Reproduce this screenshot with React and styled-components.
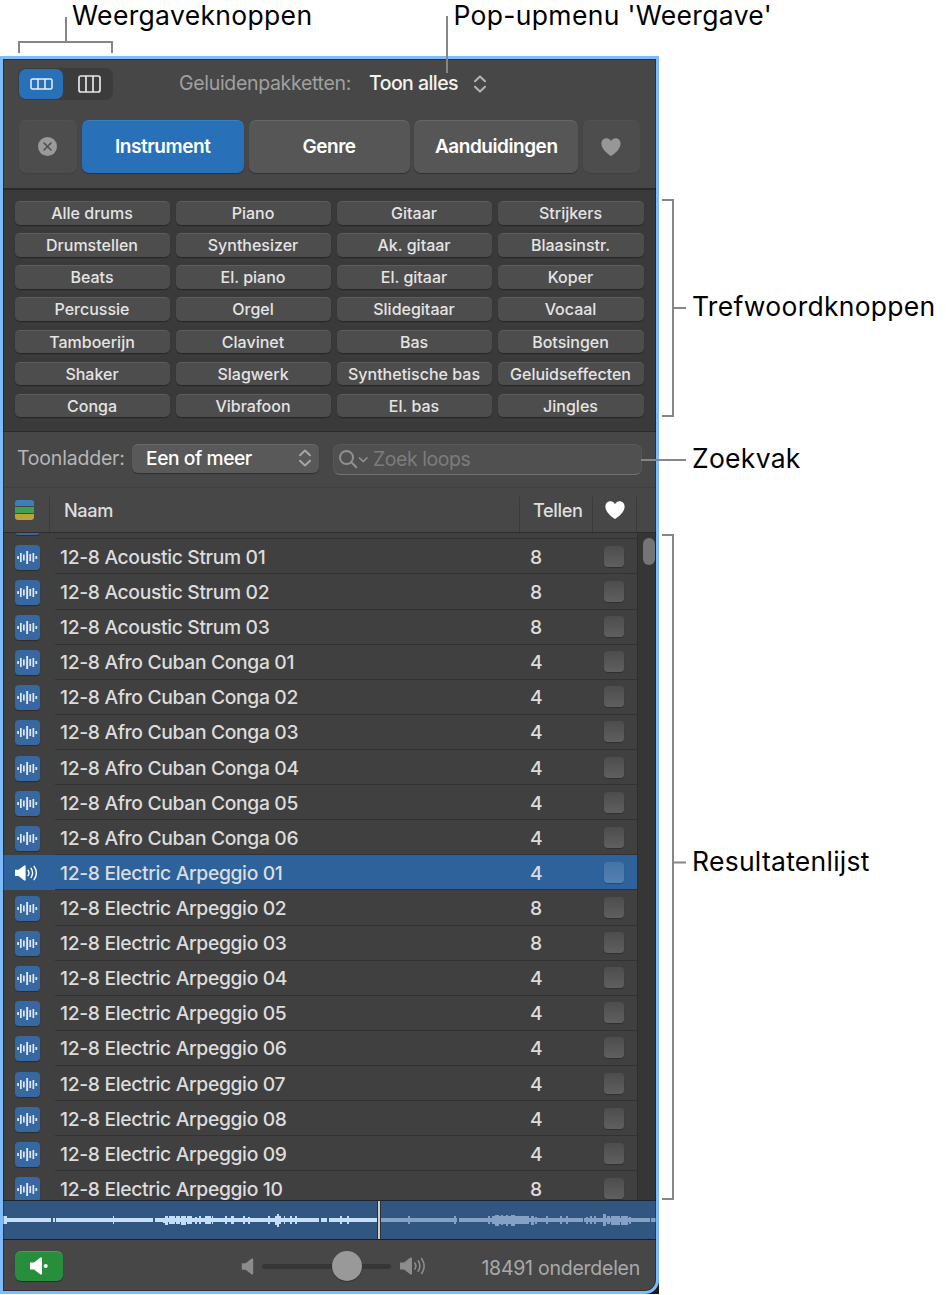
import React from 'react';
import styled, {createGlobalStyle, css} from "styled-components";

const keywords = [
    'Alle drums', 'Piano', 'Gitaar', 'Strijkers',
    'Drumstellen', 'Synthesizer', 'Ak. gitaar', 'Blaasinstr.',
    'Beats', 'El. piano', 'El. gitaar', 'Koper',
    'Percussie', 'Orgel', 'Slidegitaar', 'Vocaal',
    'Tamboerijn', 'Clavinet', 'Bas', 'Botsingen',
    'Shaker', 'Slagwerk', 'Synthetische bas', 'Geluidseffecten',
    'Conga', 'Vibrafoon', 'El. bas', 'Jingles',
]

const loops = [
    {name: '12-8 Acoustic Strum 01', beats: 8},
    {name: '12-8 Acoustic Strum 02', beats: 8},
    {name: '12-8 Acoustic Strum 03', beats: 8},
    {name: '12-8 Afro Cuban Conga 01', beats: 4},
    {name: '12-8 Afro Cuban Conga 02', beats: 4},
    {name: '12-8 Afro Cuban Conga 03', beats: 4},
    {name: '12-8 Afro Cuban Conga 04', beats: 4},
    {name: '12-8 Afro Cuban Conga 05', beats: 4},
    {name: '12-8 Afro Cuban Conga 06', beats: 4},
    {name: '12-8 Electric Arpeggio 01', beats: 4, playing: true},
    {name: '12-8 Electric Arpeggio 02', beats: 8},
    {name: '12-8 Electric Arpeggio 03', beats: 8},
    {name: '12-8 Electric Arpeggio 04', beats: 4},
    {name: '12-8 Electric Arpeggio 05', beats: 4},
    {name: '12-8 Electric Arpeggio 06', beats: 4},
    {name: '12-8 Electric Arpeggio 07', beats: 4},
    {name: '12-8 Electric Arpeggio 08', beats: 4},
    {name: '12-8 Electric Arpeggio 09', beats: 4},
    {name: '12-8 Electric Arpeggio 10', beats: 8},
]

// waveform peaks: [x, width, height]
const playedPeaks = [
    [0, 4, 8], [110, 1, 8], [160, 2, 5], [162, 3, 9], [166, 6, 8], [173, 4, 8], [178, 5, 9], [184, 5, 8], [192, 2, 7],
    [196, 2, 8], [202, 6, 8], [209, 1, 8], [222, 2, 8], [228, 3, 8], [240, 2, 8], [245, 2, 7], [265, 2, 8],
    [272, 2, 9], [274, 2, 13], [276, 2, 8], [281, 1, 8], [287, 2, 8], [292, 2, 8], [337, 2, 8], [344, 2, 8],
]
const comingPeaks = [
    [405, 2, 8], [451, 2, 8], [485, 2, 8], [489, 37, 8], [492, 4, 11], [498, 2, 10], [503, 2, 11], [508, 4, 11],
    [528, 3, 9], [532, 2, 7], [543, 2, 8], [557, 2, 8], [563, 2, 8], [583, 2, 7], [587, 2, 8], [591, 2, 8],
    [600, 3, 12], [604, 3, 8], [608, 9, 9], [618, 7, 9], [626, 2, 7],
]

const Heart = ({size, color}) => (
    <svg width={size} height={size * 0.9} viewBox="0 0 20 18" fill={color}>
        <path d="M10 18C9.6 18 .4 12 .4 5.7.4 2.500 2.600.3 5.400.3 7.400.3 9.100 1.400 10 3.200 10.900 1.400 12.600.3 14.600.3c2.800 0 5 2.200 5 5.400C19.600 12 10.400 18 10 18z"/>
    </svg>
)

const UpDown = ({color}) => (
    <svg width="14" height="18" viewBox="0 0 14 18" fill="none" stroke={color} strokeWidth="2" strokeLinecap="round"
         strokeLinejoin="round">
        <path d="M2 6.200 7 1.500l5 4.700M2 11.800l5 4.700 5-4.700"/>
    </svg>
)

const SpeakerBody = () => <path d="M0 5.500h4L10.500.6Q12 0 12 1.400v15.200Q12 18 10.500 17.400L4 12.500H0z"/>

const SpeakerWaves = ({color, width = 23}) => (
    <svg width={width} height={width * 18 / 26} viewBox="0 0 26 18" fill={color}>
        <SpeakerBody/>
        <path d="M14.800 6Q16.800 9 14.800 12M18.200 3.800Q21.600 9 18.200 14.200M21.600 1.500Q26.700 9 21.600 16.500" fill="none"
              stroke={color} strokeWidth="1.600" strokeLinecap="round"/>
    </svg>
)

const LoopIcon = () => (
    <svg width="21" height="15" viewBox="0 0 21 15" fill="#dfe9f5">
        <rect x="0.200" y="6" width="1.800" height="3" rx="0.500"/>
        <rect x="3" y="3" width="1.700" height="9"/>
        <rect x="6" y="4.500" width="1.700" height="6"/>
        <rect x="9.200" y="1" width="1.900" height="13"/>
        <rect x="12.400" y="4" width="1.700" height="7"/>
        <rect x="15.500" y="3" width="1.700" height="9"/>
        <rect x="18.400" y="6" width="1.800" height="3" rx="0.500"/>
    </svg>
)

export default function App() {
    return (
        <Page>
            <GlobalStyle/>
            <TopCallouts>
                <ViewBracket/>
                <TopLabel $left={72}>Weergaveknoppen</TopLabel>
                <TopLabel $left={141}>Pop-upmenu 'Weergave'</TopLabel>
                <PopupLine/>
            </TopCallouts>
            <Body>
                <WindowBack>
                    <Window>
                        <Toolbar>
                            <ViewRow>
                                <Segmented>
                                    <Segment $active>
                                        <svg width="23" height="12" viewBox="0 0 23 12" fill="none" stroke="#e8f1fb"
                                             strokeWidth="1.500">
                                            <rect x="1" y="1" width="21" height="10" rx="1.500"/>
                                            <path d="M8 1v10M15 1v10"/>
                                        </svg>
                                    </Segment>
                                    <Segment>
                                        <svg width="23" height="18" viewBox="0 0 23 18" fill="none" stroke="#e6e6e6"
                                             strokeWidth="1.700">
                                            <rect x="1" y="1" width="21" height="16" rx="2"/>
                                            <path d="M8 1v16M15 1v16"/>
                                        </svg>
                                    </Segment>
                                </Segmented>
                                <PackLabel>Geluidenpakketten:</PackLabel>
                                <PackValue>Toon alles</PackValue>
                                <UpDown color="#b5b5b5"/>
                            </ViewRow>
                            <Tabs>
                                <Tab $dim>
                                    <svg width="19" height="19" viewBox="0 0 19 19">
                                        <circle cx="9.500" cy="9.500" r="9.500" fill="#9a9a9a"/>
                                        <path d="M6 6l7 7M13 6l-7 7" stroke="#4e4e4e" strokeWidth="1.600"
                                              strokeLinecap="round"/>
                                    </svg>
                                </Tab>
                                <Tab $active>Instrument</Tab>
                                <Tab>Genre</Tab>
                                <Tab>Aanduidingen</Tab>
                                <Tab $dim><Heart size={20} color="#979797"/></Tab>
                            </Tabs>
                        </Toolbar>
                        <Keywords>
                            {keywords.map(word => <Keyword key={word}>{word}</Keyword>)}
                        </Keywords>
                        <Filters>
                            <ScaleLabel>Toonladder:</ScaleLabel>
                            <ScaleSelect>Een of meer<UpDown color="#a6a6a6"/></ScaleSelect>
                            <Search>
                                <svg width="29" height="19" viewBox="0 0 29 19" fill="none" stroke="#919191"
                                     strokeWidth="2" strokeLinecap="round" strokeLinejoin="round">
                                    <circle cx="7.500" cy="7.500" r="6.500"/>
                                    <path d="M12.300 12.300l5 5"/>
                                    <path d="M20.500 8l3.700 3.500L27.900 8" strokeWidth="1.700"/>
                                </svg>
                                Zoek loops
                            </Search>
                        </Filters>
                        <Header>
                            <HeadCell>
                                <Stack><i/><i/><i/></Stack>
                            </HeadCell>
                            <HeadCell $pad={14}>Naam</HeadCell>
                            <HeadCell $pad={13}>Tellen</HeadCell>
                            <HeadCell $pad={12}><Heart size={20} color="#ffffff"/></HeadCell>
                            <HeadCell/>
                        </Header>
                        <Results>
                            <List>
                                <Row>
                                    <IconCell><Badge><LoopIcon/></Badge></IconCell>
                                    <NameCell/>
                                </Row>
                                {loops.map(loop => (
                                    <Row key={loop.name} $playing={loop.playing}>
                                        <IconCell>
                                            {loop.playing ? <SpeakerWaves color="#ffffff"/> :
                                                <Badge><LoopIcon/></Badge>}
                                        </IconCell>
                                        <NameCell $playing={loop.playing}>
                                            <Name>{loop.name}</Name>
                                            <Beats>{loop.beats}</Beats>
                                            <Check $playing={loop.playing}/>
                                        </NameCell>
                                    </Row>
                                ))}
                            </List>
                            <Scroll><Thumb/></Scroll>
                        </Results>
                        <Wave>
                            <svg width="653" height="38" viewBox="0 0 653 38" shapeRendering="crispEdges">
                                <g fill="#c5defb">
                                    <path d="M0 17h48v4H0zM50 17h1.500v4H50zM53 17h97v4H53zM152 17h164v4H152zM318 17h6v4h-6zM326 17h48v4h-48z"/>
                                    {playedPeaks.map(([x, w, h]) => <rect key={x} x={x} y={19 - h / 2} width={w}
                                                                          height={h}/>)}
                                </g>
                                <g fill="#87a1c6">
                                    <path d="M378 17h76v4h-76zM456 17h124v4H456zM581 17h66v4h-66zM648 17h5v4h-5z"/>
                                    {comingPeaks.map(([x, w, h]) => <rect key={x} x={x} y={19 - h / 2} width={w}
                                                                          height={h}/>)}
                                </g>
                                <rect x="374" y="0" width="4" height="38" fill="#27303b"/>
                                <rect x="375" y="0" width="2" height="38" fill="#d0cbc6"/>
                            </svg>
                        </Wave>
                        <Footer>
                            <PlayButton>
                                <svg width="18" height="18" viewBox="0 0 18 18" fill="#ffffff">
                                    <SpeakerBody/>
                                    <circle cx="15.700" cy="9" r="2"/>
                                </svg>
                            </PlayButton>
                            <svg width="13" height="17" viewBox="0 0 12 18" fill="#8c8c8c"><SpeakerBody/></svg>
                            <Slider><Knob/></Slider>
                            <SpeakerWaves color="#8c8c8c" width={26}/>
                            <Count>18491 onderdelen</Count>
                        </Footer>
                    </Window>
                </WindowBack>
                <SideCallouts>
                    <Callout $top={143} $height={218}>
                        <Bracket/><Tick/><Label>Trefwoordknoppen</Label>
                    </Callout>
                    <Callout $top={27} $height={32}>
                        <SearchLine/><Label>Zoekvak</Label>
                    </Callout>
                    <Callout $top={58} $height={666} $shift={-9}>
                        <Bracket/><Tick/><Label>Resultatenlijst</Label>
                    </Callout>
                </SideCallouts>
            </Body>
        </Page>
    );
}

const GlobalStyle = createGlobalStyle`
  body {
    margin: 0;
    background: #ffffff;
  }

  * {
    box-sizing: border-box;
  }

  svg {
    display: block;
    flex: none;
  }
`

const Page = styled.div`
  width: 947px;
  height: 1295px;
  font-family: Inter, "Liberation Sans", sans-serif;
  white-space: nowrap;
`

const TopCallouts = styled.div`
  position: relative;
  display: flex;
  height: 56px;
`
const TopLabel = styled.div`
  margin-left: ${props => props.$left}px;
  font-size: 26.5px;
  line-height: 31px;
  letter-spacing: 0.33px;
  color: #000000;
`
const ViewBracket = styled.div`
  position: absolute;
  left: 18px;
  top: 41px;
  width: 95px;
  height: 12px;
  border: 2px solid #868686;
  border-bottom: 0;

  &::before {
    content: "";
    position: absolute;
    left: 45px;
    top: -26px;
    width: 2px;
    height: 25px;
    background: #868686;
  }
`
// runs down over the window edge to the pop-up menu
const PopupLine = styled.div`
  position: absolute;
  z-index: 1;
  left: 446px;
  top: 16px;
  width: 2px;
  height: 57px;
  background: #868686;
`

const Body = styled.div`
  display: flex;
`
const WindowBack = styled.div`
  width: 659px;
  height: 1238px;
  background: linear-gradient(#74b6fb 90%, #1c1a12 90%);
`
const Window = styled.div`
  position: relative;
  width: 659px;
  height: 1238px;
  display: flex;
  flex-direction: column;
  overflow: hidden;
  border: 3px solid #7dbbfc;
  border-bottom-right-radius: 14px;
  background: #474747;

  /* dark hairline just inside the focus ring */
  &::after {
    content: "";
    position: absolute;
    inset: 0;
    border: 1px solid rgba(0, 0, 0, 0.3);
    border-bottom-right-radius: 11px;
    pointer-events: none;
  }
`

const Toolbar = styled.div`
  height: 131px;
  padding: 9px 16px 0 16px;
  border-bottom: 2px solid #2a2a2a;
  background: #474747;
`
const ViewRow = styled.div`
  display: flex;
  align-items: center;
  height: 32px;
  margin-left: -1px;
  font-size: 19.5px;
`
const Segmented = styled.div`
  display: flex;
  width: 95px;
  height: 32px;
  padding: 1px;
  border-radius: 8px;
  background: #3c3c3c;
`
const Segment = styled.div`
  display: flex;
  flex: none;
  align-items: center;
  justify-content: center;
  width: ${props => props.$active ? '44px' : '52px'};
  height: 30px;
  border-radius: 7px;
  background: ${props => props.$active ? '#2870b8' : 'transparent'};
`
const PackLabel = styled.div`
  width: 190px;
  margin-left: 66px;
  padding-bottom: 2px;
  letter-spacing: -0.32px;
  color: #a0a0a0;
`
const PackValue = styled.div`
  width: 104px;
  padding-bottom: 2px;
  font-weight: 500;
  letter-spacing: -0.55px;
  color: #f2f2f2;
`
const Tabs = styled.div`
  display: grid;
  grid-template-columns: 58px 162px 161px 164px 57px;
  justify-content: space-between;
  margin-top: 20px;
`
const Tab = styled.div`
  display: flex;
  align-items: center;
  justify-content: center;
  height: 53px;
  padding-bottom: 1px;
  border-radius: 7px;
  font-size: 19px;
  font-weight: 600;
  letter-spacing: -0.45px;
  color: #ffffff;
  background: #565656;
  box-shadow: inset 0 1px 0 rgba(255, 255, 255, 0.1), 0 1px 1px rgba(0, 0, 0, 0.3);
  ${props => props.$active && css`
    background: #2870b8;
  `}
  ${props => props.$dim && css`
    padding: 0 1px 0 0;
    background: #4d4d4d;
    box-shadow: inset 0 1px 0 rgba(255, 255, 255, 0.03), 0 1px 1px rgba(0, 0, 0, 0.1);
  `}
`

const Keywords = styled.div`
  display: grid;
  grid-template-columns: 155px 155px 155px 146px;
  grid-auto-rows: 23.5px;
  gap: 8.65px 6px;
  height: 242px;
  padding: 11px 0 0 12px;
  border-bottom: 1px solid #2b2b2b;
  background: #3a3a3a;
`
const Keyword = styled.div`
  padding-right: 1px;
  border-radius: 5px;
  background: #4d4d4d;
  box-shadow: inset 0 1px 0 rgba(255, 255, 255, 0.09), 0 1px 1px rgba(0, 0, 0, 0.35);
  font-size: 16px;
  font-weight: 500;
  line-height: 24px;
  text-align: center;
  color: #e4e4e4;
`

const Filters = styled.div`
  display: flex;
  height: 56px;
  padding-top: 12px;
  border-bottom: 1px solid #404040;
  font-size: 19.5px;
`
const ScaleLabel = styled.div`
  width: 115px;
  margin-left: 14px;
  line-height: 29px;
  letter-spacing: -0.2px;
  color: #b6b6b6;
`
const ScaleSelect = styled.div`
  display: flex;
  align-items: center;
  justify-content: space-between;
  width: 187px;
  height: 29px;
  padding: 0 7px 1px 14px;
  border-radius: 6px;
  background: #595959;
  box-shadow: inset 0 1px 0 rgba(255, 255, 255, 0.1), 0 1px 1px rgba(0, 0, 0, 0.35);
  font-size: 19.2px;
  font-weight: 500;
  letter-spacing: -0.42px;
  color: #ffffff;
`
const Search = styled.div`
  display: flex;
  align-items: center;
  gap: 5px;
  width: 309px;
  height: 31px;
  margin-left: 14px;
  padding: 0 0 1px 5px;
  border: 1px solid #585858;
  border-bottom-color: #727272;
  border-radius: 7px;
  background: #505050;
  letter-spacing: -0.45px;
  color: #7c7c7c;
`

const Header = styled.div`
  display: grid;
  grid-template-columns: 46px 470px 73px 44px 20px;
  height: 45px;
  padding-top: 9px;
  border-bottom: 1px solid #2d2d2d;
`
const HeadCell = styled.div`
  display: flex;
  align-items: center;
  padding: 0 0 9px ${props => props.$pad || 0}px;
  border-left: ${props => props.$pad === undefined ? 0 : '1px solid #3b3b3b'};
  font-size: 18.2px;
  font-weight: 500;
  letter-spacing: -0.4px;
  color: #dedede;

  &:last-child {
    border-left: 1px solid #3b3b3b;
  }
`
const Stack = styled.div`
  display: flex;
  flex-direction: column;
  gap: 1px;
  width: 19px;
  height: 20px;
  margin-left: 12px;
  border-radius: 3px;
  overflow: hidden;

  i {
    flex: 1;
    background: #3c80ba;
  }

  i:nth-child(2) {
    background: #3fa24f;
  }

  i:nth-child(3) {
    background: #bba42f;
  }
`

const Results = styled.div`
  display: flex;
  height: 667px;
`
const List = styled.div`
  flex: 1;
  overflow: hidden;
  background: #404040;

  > :first-child {
    margin-top: -28.800px;
  }
`
const Row = styled.div`
  display: flex;
  height: 35.110px;
  background: ${props => props.$playing ? '#2e629b' : 'transparent'};
`
const IconCell = styled.div`
  display: flex;
  align-items: center;
  width: 52px;
  padding: 1px 0 0 12px;
`
const Badge = styled.div`
  display: flex;
  align-items: center;
  justify-content: center;
  width: 25px;
  height: 25px;
  border-radius: 4px;
  background: #3868a1;
  box-shadow: 0 1px 1px rgba(0, 0, 0, 0.3);
`
const NameCell = styled.div`
  display: flex;
  align-items: center;
  flex: 1;
  padding-left: 5px;
  border-bottom: 1px solid ${props => props.$playing ? '#28323e' : '#323232'};
  font-size: 19.3px;
  font-weight: 500;
  color: #dcdcdc;
`
const Name = styled.div`
  width: 470px;
  padding-top: 1px;
  letter-spacing: -0.34px;
`
const Beats = styled.div`
  width: 74px;
  padding-top: 1px;
`
const Check = styled.div`
  width: 20px;
  height: 21px;
  border-radius: 4px;
  background: ${props => props.$playing ? 'linear-gradient(#4473a6, #5581b0)' : 'linear-gradient(#4d4d4d, #5f5f5f)'};
  box-shadow: 0 1px 1px rgba(0, 0, 0, 0.25);
`
const Scroll = styled.div`
  width: 19px;
  padding: 5px 0 0 5px;
  border-left: 1px solid #2f2f2f;
  background: #363636;
`
const Thumb = styled.div`
  width: 12px;
  height: 27px;
  border-radius: 6px;
  background: #757575;
`

const Wave = styled.div`
  height: 40px;
  border-top: 1px solid #1d2430;
  border-bottom: 1px solid #1f1f1f;
  background: #315781;
`
const Footer = styled.div`
  display: flex;
  align-items: center;
  height: 51px;
  padding: 1px 16px 0 12px;
  font-size: 19.5px;
  color: #a9a9a9;
`
const PlayButton = styled.div`
  display: flex;
  align-items: center;
  justify-content: center;
  width: 48px;
  height: 30px;
  margin-right: 178px;
  border-radius: 6px;
  background: #278f3b;
  box-shadow: inset 0 1px 0 rgba(255, 255, 255, 0.15), 0 1px 1px rgba(0, 0, 0, 0.4);
`
const Slider = styled.div`
  display: flex;
  align-items: center;
  width: 129px;
  height: 5px;
  margin: 0 9px 0 8px;
  border-radius: 3px;
  background: #363636;
`
const Knob = styled.div`
  flex: none;
  width: 30px;
  height: 30px;
  margin-left: 70px;
  border-radius: 50%;
  background: #999999;
  box-shadow: 0 1px 1px rgba(0, 0, 0, 0.3);
`
const Count = styled.div`
  margin: 3px 0 0 auto;
  letter-spacing: -0.25px;
`

const SideCallouts = styled.div`
  flex: 1;
  padding-left: 3px;
`
const Callout = styled.div`
  position: relative;
  display: flex;
  align-items: center;
  height: ${props => props.$height}px;
  margin-top: ${props => props.$top}px;

  > :nth-child(n + 2) {
    transform: translateY(${props => (props.$shift || 0) / 2}px);
  }
`
const Bracket = styled.div`
  align-self: stretch;
  width: 12px;
  border: 2px solid #868686;
  border-left: 0;
`
const Tick = styled.div`
  width: 12px;
  height: 2px;
  background: #868686;
`
// starts at the right edge of the search box
const SearchLine = styled.div`
  position: relative;
  left: -21px;
  width: 45px;
  height: 2px;
  margin-right: -21px;
  background: #868686;
`
const Label = styled.div`
  margin-left: 6px;
  padding-bottom: 4px;
  font-size: 26.5px;
  line-height: 31px;
  letter-spacing: 0.27px;
  color: #000000;
`
